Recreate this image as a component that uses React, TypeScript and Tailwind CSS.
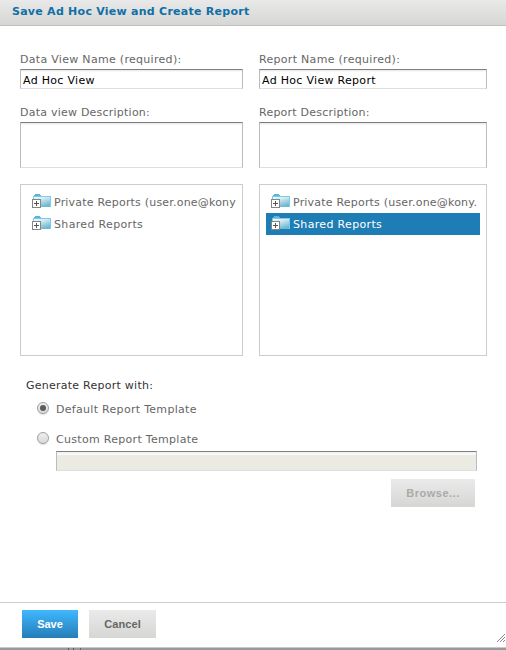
import React from "react";

const inputEdge =
  "border border-t-[#7f7f7f] border-l-[#bcbcbc] border-r-[#bcbcbc] border-b-[#dedede] shadow-[inset_0_2px_2px_-1px_#e4e4e4]";

function Folder() {
  return (
    <svg className="block h-[16px] w-[20px] shrink-0" viewBox="0 0 20 16" shapeRendering="crispEdges">
      <defs>
        <linearGradient id="folder" x1="0" y1="0" x2="0.5" y2="1">
          <stop offset="0" stopColor="#f4fafc" />
          <stop offset="0.35" stopColor="#d3e9f1" />
          <stop offset="1" stopColor="#6fbad3" />
        </linearGradient>
      </defs>
      <path d="M2 2V1H3V0H8V1H9V2Z" fill="#58b5e0" />
      <rect x="1" y="2" width="18" height="11" fill="#7accea" />
      <rect x="2" y="3" width="16" height="10" fill="url(#folder)" />
      <rect x="0" y="5" width="9" height="9" fill="#858585" />
      <rect x="1" y="6" width="7" height="7" fill="#ffffff" />
      <path d="M2 9H7V10H2ZM4 7H5V12H4Z" fill="#555555" />
    </svg>
  );
}

function TreeRow({ label, selected = false, tracking = "" }: { label: string; selected?: boolean; tracking?: string }) {
  return (
    <div className={`flex h-[22px] items-center overflow-hidden pl-[5px] ${selected ? "bg-[#1f7db5] text-white" : ""}`}>
      <Folder />
      <span className={`ml-[2px] pt-[2px] whitespace-nowrap leading-[22px] ${tracking}`}>{label}</span>
    </div>
  );
}

function Column({
  name,
  value,
  description,
  folder,
  width,
  selected = false,
}: {
  name: string;
  value: string;
  description: string;
  folder: string;
  width: string;
  selected?: boolean;
}) {
  return (
    <div className={width}>
      <label className="block h-[18px] leading-[18px]">{name}</label>
      <div className={`h-[20px] bg-white pl-[2px] leading-[21px] text-black ${inputEdge}`}>{value}</div>
      <label className="mt-[15px] block h-[18px] leading-[18px] tracking-[0.23px]">{description}</label>
      <div className={`h-[46px] bg-white ${inputEdge}`} />
      <div className="mt-[16px] h-[172px] border border-[#cccccc] px-[6px] pt-[6px]">
        <TreeRow label={folder} tracking="tracking-[0.2px]" />
        <TreeRow label="Shared Reports" selected={selected} tracking="tracking-[0.34px]" />
      </div>
    </div>
  );
}

function Radio({ label, checked = false }: { label: string; checked?: boolean }) {
  return (
    <div className="flex h-[16px] items-center">
      <span className="mb-[2px] flex size-[12px] shrink-0 items-center justify-center rounded-full border border-[#a0a0a0] bg-linear-to-b from-[#eeeeee] to-[#d9d9d9] shadow-[0_1px_1px_#dddddd]">
        {checked && <span className="size-[6px] rounded-full bg-[#5b5b5b]" />}
      </span>
      <span className="ml-[7px] pt-[2px] leading-[16px]">{label}</span>
    </div>
  );
}

const buttonText = "flex h-[28px] items-center justify-center font-['Liberation_Sans',sans-serif] text-[11px] font-bold";

export default function App() {
  return (
    <div className="flex h-[650px] w-[506px] flex-col overflow-hidden bg-white font-['DejaVu_Sans',sans-serif] text-[11px] tracking-[0.3px] text-[#666666]">
      <header className="h-[26px] shrink-0 border-b border-[#c0c0be] bg-linear-to-b from-[#e9e9e9] to-[#d6d6d4] pl-[12px] text-[11px] leading-[23px] font-bold tracking-[0.26px] text-[#0f70a6]">
        Save Ad Hoc View and Create Report
      </header>
      <main className="h-[576px] shrink-0 pt-[25px]">
        <div className="flex gap-[16px] pl-[20px]">
          <Column
            name="Data View Name (required):"
            value="Ad Hoc View"
            description="Data view Description:"
            folder="Private Reports (user.one@kony"
            width="w-[223px]"
          />
          <Column
            name="Report Name (required):"
            value="Ad Hoc View Report"
            description="Report Description:"
            folder="Private Reports (user.one@kony."
            width="w-[228px]"
            selected
          />
        </div>
        <p className="mt-[21px] h-[16px] pl-[26px] leading-[18px] tracking-[0.25px] text-[#333333]">Generate Report with:</p>
        <div className="mt-[8px] pl-[37px]">
          <Radio label="Default Report Template" checked />
          <div className="h-[14px]" />
          <Radio label="Custom Report Template" />
        </div>
        <div className="mt-[4px] ml-[56px] h-[20px] w-[421px] border border-t-[#7f7f7f] border-r-[#bcbcbc] border-b-[#dedede] border-l-[#bcbcbc] bg-[#ebebe4] bg-linear-to-b from-[#f0f0f0] from-0% via-[#fbfbfb] via-[3px] to-[#ebebe4] to-[3px]" />
        <div className={`${buttonText} mt-[8px] ml-[391px] w-[84px] bg-linear-to-b from-[#eaeaea] to-[#d6d6d4] tracking-[0.5px] text-[#aaaaaa]`}>
          Browse...
        </div>
      </main>
      <footer className="flex h-[45px] shrink-0 items-start border-t border-[#cccccc] pt-[7px] pl-[22px]">
        <div className={`${buttonText} w-[56px] bg-linear-to-b from-[#40b8ff] to-[#267db7] tracking-normal text-white`}>Save</div>
        <div className={`${buttonText} ml-[11px] w-[67px] bg-linear-to-b from-[#eaeaea] to-[#d6d6d4] tracking-[0.1px] text-[#666666]`}>Cancel</div>
        <svg className="mt-[24px] mr-[1px] ml-auto block h-[8px] w-[8px]" viewBox="0 0 8 8" shapeRendering="crispEdges">
          <path
            d="M0 7h1v1H0zM1 6h1v1H1zM2 5h1v1H2zM3 4h1v1H3zM4 3h1v1H4zM5 2h1v1H5zM6 1h1v1H6zM7 0h1v1H7zM3 7h1v1H3zM4 6h1v1H4zM5 5h1v1H5zM6 4h1v1H6zM7 3h1v1H7zM6 7h1v1H6zM7 6h1v1H7z"
            fill="#888888"
          />
        </svg>
      </footer>
      <div className="flex h-[3px] shrink-0 border-t border-[#c9c9c9] bg-[#999999] pl-[68px]">
        <span className="h-[2px] w-px bg-[#555566]" />
        <span className="ml-[4px] h-[2px] w-px bg-[#555566]" />
        <span className="ml-[6px] h-[2px] w-px bg-[#666666]" />
      </div>
    </div>
  );
}
